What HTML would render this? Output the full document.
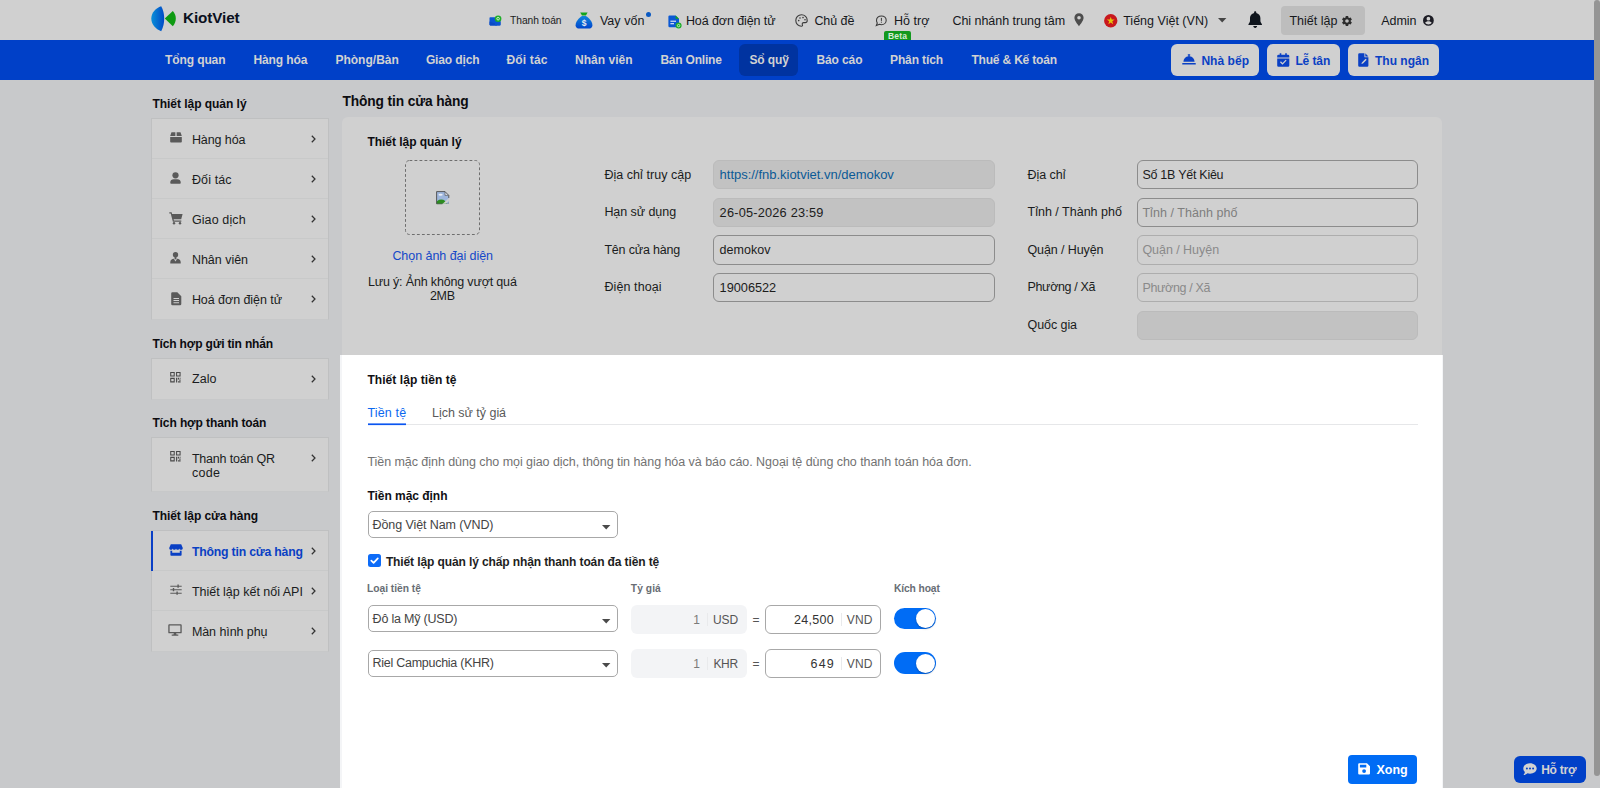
<!DOCTYPE html>
<html lang="vi"><head><meta charset="utf-8"><title>KiotViet - Thông tin cửa hàng</title>
<style>
html,body{margin:0;padding:0;}
body{width:1600px;height:788px;overflow:hidden;position:relative;background:#c8c9cb;font-family:"Liberation Sans", sans-serif;}
.t{position:absolute;white-space:pre;font-family:"Liberation Sans", sans-serif;}
svg{display:block;overflow:visible}
</style></head><body>
<div style="position:absolute;left:0px;top:0px;width:1600px;height:40px;background:#d0d0d0"></div>
<div style="position:absolute;left:0px;top:40px;width:1600px;height:40px;background:#0040c8"></div>
<svg style="position:absolute;left:151px;top:5.5px;" width="26" height="26" viewBox="0 0 26 26"><defs><linearGradient id="lg" x1="0" y1="0" x2="1" y2="0"><stop offset="0" stop-color="#0a8fd8"/><stop offset="1" stop-color="#0049c6"/></linearGradient></defs><path d="M10.2 0.3 C4.6 2.2 0.3 6.8 0.3 12.6 C0.3 18.6 4.6 23.2 10.2 25.2 C12.2 21.5 13.2 17.2 13.2 12.7 C13.2 8.2 12.2 3.9 10.2 0.3 Z" fill="url(#lg)"/><path d="M13.8 12.6 L21.8 4.9 C23.8 7.1 24.8 9.8 24.8 12.6 C24.8 15.4 23.8 18.1 21.8 20.3 Z" fill="#0e9a12"/></svg>
<span class="t" style="left:183.0px;top:8px;line-height:20px;font-size:15.25px;font-weight:700;color:#0b1020;letter-spacing:-0.10px;">KiotViet</span>
<svg style="position:absolute;left:488.5px;top:14.5px;" width="13" height="11" viewBox="0 0 13 11"><path d="M1.3 2.2 H8 V10.4 H1.3 a0.8 0.8 0 0 1 -0.8 -0.8 V3 a0.8 0.8 0 0 1 0.8 -0.8Z" fill="#0a55d2"/><path d="M0.5 6.5 L6 8.4 L11.5 6.5 V9.6 a0.8 0.8 0 0 1 -0.8 0.8 H1.3 a0.8 0.8 0 0 1 -0.8 -0.8Z" fill="#0a4ac4"/><rect x="6" y="5" width="5.5" height="5.4" fill="#0a55d2"/><circle cx="9.1" cy="3.7" r="3.3" fill="#1fae2a"/><circle cx="9.1" cy="3.7" r="1.3" fill="none" stroke="#d8f0d8" stroke-width="0.9"/></svg>
<span class="t" style="left:510.0px;top:14px;line-height:14px;font-size:10.25px;font-weight:400;color:#1c1c22;letter-spacing:-0.04px;">Thanh toán</span>
<svg style="position:absolute;left:574.5px;top:11.5px;" width="18" height="17" viewBox="0 0 18 17"><defs><linearGradient id="mb" x1="0" y1="0" x2="0" y2="1"><stop offset="0" stop-color="#0f86dc"/><stop offset="1" stop-color="#0044cc"/></linearGradient></defs><path d="M5.2 0.4 H12.6 L10.9 3.6 H7 Z" fill="#12a51c"/><path d="M7 4 H10.9 C14 5.8 17.4 9.6 17.4 13.2 C17.4 15.6 15.8 16.6 13.6 16.6 H4.4 C2.2 16.6 0.6 15.6 0.6 13.2 C0.6 9.6 4 5.8 7 4 Z" fill="url(#mb)"/><text x="9" y="14" font-family="Liberation Sans, sans-serif" font-size="8.5" font-weight="700" fill="#e4e8f0" text-anchor="middle">$</text></svg>
<span class="t" style="left:599.9px;top:13px;line-height:17px;font-size:12.5px;font-weight:400;color:#16181c;letter-spacing:0.04px;">Vay vốn</span>
<div style="position:absolute;left:646px;top:11.9px;width:5px;height:5px;border-radius:50%;background:#0a59c2"></div>
<svg style="position:absolute;left:668px;top:14.5px;" width="14" height="14" viewBox="0 0 14 14"><path d="M1.6 0.4 H7.6 L11 3.8 V11 a1.2 1.2 0 0 1 -1.2 1.2 H1.6 A1.2 1.2 0 0 1 0.4 11 V1.6 A1.2 1.2 0 0 1 1.6 0.4Z" fill="#0a58d4"/><path d="M7.6 0.4 L11 3.8 H7.6Z" fill="#12a51c"/><rect x="2.4" y="5.6" width="5.6" height="1.3" fill="#cfd8ee"/><rect x="2.4" y="8" width="3.6" height="1.3" fill="#cfd8ee"/><circle cx="10.6" cy="10.6" r="3" fill="#1fae2a"/><circle cx="10.6" cy="10.6" r="1.2" fill="none" stroke="#d8f0d8" stroke-width="0.8"/></svg>
<span class="t" style="left:685.9px;top:13px;line-height:17px;font-size:12.5px;font-weight:400;color:#16181c;letter-spacing:-0.09px;">Hoá đơn điện tử</span>
<svg style="position:absolute;left:794.5px;top:14px;" width="13" height="13" viewBox="0 0 13 13"><path d="M6.5 0.8 C3.2 0.8 0.8 3.4 0.8 6.5 C0.8 9.7 3.3 12.2 6.4 12.2 C7.4 12.2 7.8 11.5 7.4 10.7 C6.9 9.6 7.5 8.6 8.7 8.6 H10.2 C11.4 8.6 12.2 7.8 12.2 6.4 C12.2 3.2 9.7 0.8 6.5 0.8Z" fill="none" stroke="#3a3a3a" stroke-width="1.1"/><circle cx="3.7" cy="6.6" r="0.8" fill="#3a3a3a"/><circle cx="5" cy="4" r="0.8" fill="#3a3a3a"/><circle cx="8" cy="3.6" r="0.8" fill="#3a3a3a"/><circle cx="10" cy="5.8" r="0.8" fill="#3a3a3a"/></svg>
<span class="t" style="left:814.4px;top:13px;line-height:17px;font-size:12.5px;font-weight:400;color:#16181c;letter-spacing:-0.07px;">Chủ đề</span>
<svg style="position:absolute;left:874.5px;top:15px;" width="12" height="12" viewBox="0 0 12 12"><path d="M6.4 0.9 C9.2 0.9 11.2 2.8 11.2 5.3 C11.2 7.8 9.2 9.7 6.4 9.7 C5.7 9.7 5 9.6 4.4 9.3 L1.3 10.6 L2.3 8 C1.8 7.3 1.5 6.3 1.5 5.3 C1.5 2.8 3.6 0.9 6.4 0.9Z" fill="none" stroke="#3a3a3a" stroke-width="1.05"/><rect x="5.9" y="2.9" width="1" height="3" fill="#3a3a3a"/><rect x="5.9" y="6.7" width="1" height="1" fill="#3a3a3a"/></svg>
<span class="t" style="left:893.9px;top:13px;line-height:17px;font-size:12.5px;font-weight:400;color:#16181c;letter-spacing:0.04px;">Hỗ trợ</span>
<div style="position:absolute;left:884px;top:31px;width:27px;height:9px;background:#12981e;border-radius:2px 2px 0 0"></div>
<span class="t" style="left:888.1px;top:30px;line-height:12px;font-size:8.5px;font-weight:700;color:#d6ecd6;letter-spacing:0.13px;">Beta</span>
<span class="t" style="left:952.4px;top:13px;line-height:17px;font-size:12.5px;font-weight:400;color:#16181c;letter-spacing:-0.03px;">Chi nhánh trung tâm</span>
<svg style="position:absolute;left:1073.5px;top:13px;" width="10" height="13.5" viewBox="0 0 10 13.5"><path d="M5 0.3 C2.3 0.3 0.4 2.3 0.4 4.8 C0.4 8 5 13.2 5 13.2 C5 13.2 9.6 8 9.6 4.8 C9.6 2.3 7.7 0.3 5 0.3Z M5 3 A1.8 1.8 0 1 1 5 6.6 A1.8 1.8 0 1 1 5 3Z" fill="#4d4d4d" fill-rule="evenodd"/></svg>
<svg style="position:absolute;left:1104px;top:13.8px;" width="13.5" height="13.5" viewBox="0 0 14 14"><circle cx="7" cy="7" r="6.9" fill="#c8171d"/><path d="M7 2.9 L8 5.8 L11.1 5.8 L8.6 7.6 L9.5 10.6 L7 8.8 L4.5 10.6 L5.4 7.6 L2.9 5.8 L6 5.8Z" fill="#e6c20a"/></svg>
<span class="t" style="left:1123.2px;top:13px;line-height:17px;font-size:12.5px;font-weight:400;color:#16181c;letter-spacing:0.01px;">Tiếng Việt (VN)</span>
<svg style="position:absolute;left:1217.5px;top:17.5px;" width="8.4" height="4.6" viewBox="0 0 8.4 4.6"><path d="M0 0 H8.4 L4.2 4.6Z" fill="#454545"/></svg>
<svg style="position:absolute;left:1248px;top:10.7px;" width="14.4" height="17.2" viewBox="0 0 14.4 17.2"><path d="M7.2 0.3 C6.6 0.3 6.1 0.8 6.1 1.4 V1.9 C3.7 2.4 2 4.5 2 7 V9.6 C2 10.9 1.5 12 0.6 12.9 C0.2 13.3 0.4 14.1 1.1 14.1 H13.3 C14 14.1 14.2 13.3 13.8 12.9 C12.9 12 12.4 10.9 12.4 9.6 V7 C12.4 4.5 10.7 2.4 8.3 1.9 V1.4 C8.3 0.8 7.8 0.3 7.2 0.3Z M5.3 15 H9.1 C9.1 16.1 8.3 16.9 7.2 16.9 C6.1 16.9 5.3 16.1 5.3 15Z" fill="#0e141c"/></svg>
<div style="position:absolute;left:1281px;top:6px;width:84px;height:29px;background:#bdbdbd;border-radius:4px"></div>
<span class="t" style="left:1289.4px;top:13px;line-height:17px;font-size:12.5px;font-weight:400;color:#16181c;letter-spacing:0.00px;">Thiết lập</span>
<svg style="position:absolute;left:1341.2px;top:14.6px;" width="12" height="12" viewBox="0 0 24 24"><path d="M19.4 13 c0-.3.1-.6.1-1 s0-.7-.1-1 l2.1-1.6 c.2-.2.2-.4.1-.6 l-2-3.5 c-.1-.2-.4-.3-.6-.2 l-2.5 1 c-.5-.4-1.100-.700-1.700-1 l-.4-2.600 c0-.200-.200-.400-.500-.400 h-4 c-.200 0-.500.200-.500.400 l-.4 2.600 c-.600.300-1.200.600-1.700 1 l-2.500-1 c-.200-.100-.500 0-.600.200 l-2 3.500 c-.100.200-.100.500.100.600 l2.100 1.600 c0 .300-.100.600-.100 1 s0 .700.100 1 l-2.100 1.600 c-.200.200-.200.400-.100.600 l2 3.500 c.100.200.400.300.600.200 l2.500-1 c.500.400 1.100.700 1.700 1 l.4 2.600 c0 .200.200.400.500.400 h4 c.200 0 .500-.200.500-.400 l.4-2.600 c.600-.300 1.200-.600 1.700-1 l2.500 1 c.200.100.500 0 .600-.200 l2-3.500 c.100-.200.100-.500-.100-.600 l-2.100-1.600 z M12 15.500 c-1.900 0-3.500-1.600-3.500-3.500 s1.600-3.500 3.500-3.500 3.500 1.600 3.500 3.500 -1.600 3.500-3.500 3.500 z" fill="#2c2c2c" fill-rule="evenodd"/></svg>
<span class="t" style="left:1381.2px;top:13px;line-height:17px;font-size:12.5px;font-weight:400;color:#16181c;letter-spacing:-0.02px;">Admin</span>
<svg style="position:absolute;left:1423.3px;top:15px;" width="10.8" height="10.8" viewBox="0 0 20 20"><path d="M10 0 A10 10 0 1 0 10 20 A10 10 0 1 0 10 0Z M10 3.400 A3.400 3.400 0 1 1 10 10.200 A3.400 3.400 0 1 1 10 3.400Z M10 17.600 C7.500 17.600 5.300 16.400 4 14.500 C4 12.500 8 11.400 10 11.400 C12 11.400 16 12.500 16 14.500 C14.700 16.400 12.500 17.600 10 17.600Z" fill="#1c1c24" fill-rule="evenodd"/></svg>
<div style="position:absolute;left:739px;top:44px;width:59px;height:31.5px;background:#0033a0;border-radius:6px"></div>
<span class="t" style="left:165.0px;top:52px;line-height:16px;font-size:12px;font-weight:700;color:#d2d2d2;letter-spacing:-0.10px;">Tổng quan</span>
<span class="t" style="left:253.4px;top:52px;line-height:16px;font-size:12px;font-weight:700;color:#d2d2d2;letter-spacing:-0.08px;">Hàng hóa</span>
<span class="t" style="left:335.4px;top:52px;line-height:16px;font-size:12px;font-weight:700;color:#d2d2d2;letter-spacing:0.02px;">Phòng/Bàn</span>
<span class="t" style="left:425.9px;top:52px;line-height:16px;font-size:12px;font-weight:700;color:#d2d2d2;letter-spacing:-0.13px;">Giao dịch</span>
<span class="t" style="left:506.4px;top:52px;line-height:16px;font-size:12px;font-weight:700;color:#d2d2d2;letter-spacing:0.18px;">Đối tác</span>
<span class="t" style="left:575.0px;top:52px;line-height:16px;font-size:12px;font-weight:700;color:#d2d2d2;letter-spacing:0.02px;">Nhân viên</span>
<span class="t" style="left:660.4px;top:52px;line-height:16px;font-size:12px;font-weight:700;color:#d2d2d2;letter-spacing:-0.21px;">Bán Online</span>
<span class="t" style="left:749.4px;top:52px;line-height:16px;font-size:12px;font-weight:700;color:#d2d2d2;letter-spacing:-0.10px;">Sổ quỹ</span>
<span class="t" style="left:816.4px;top:52px;line-height:16px;font-size:12px;font-weight:700;color:#d2d2d2;letter-spacing:-0.10px;">Báo cáo</span>
<span class="t" style="left:890.0px;top:52px;line-height:16px;font-size:12px;font-weight:700;color:#d2d2d2;letter-spacing:-0.12px;">Phân tích</span>
<span class="t" style="left:971.4px;top:52px;line-height:16px;font-size:12px;font-weight:700;color:#d2d2d2;letter-spacing:-0.18px;">Thuế &amp; Kế toán</span>
<div style="position:absolute;left:1171.3px;top:44px;width:87.8px;height:31.6px;background:#d0d0d0;border-radius:6px"></div>
<div style="position:absolute;left:1267.3px;top:44px;width:72.8px;height:31.6px;background:#d0d0d0;border-radius:6px"></div>
<div style="position:absolute;left:1348px;top:44px;width:90.8px;height:31.6px;background:#d0d0d0;border-radius:6px"></div>
<svg style="position:absolute;left:1181.5px;top:53.5px;" width="14" height="11" viewBox="0 0 14 11"><path d="M5.8 0.2 H8.2 V1.4 H7.6 V2.2 C10.4 2.5 12.5 4.8 12.6 7.700 H1.4 C1.5 4.8 3.600 2.5 6.4 2.2 V1.4 H5.8Z" fill="#0a40c4"/><rect x="0.2" y="8.9" width="13.6" height="1.7" rx="0.5" fill="#0a40c4"/></svg>
<span class="t" style="left:1201.4px;top:53px;line-height:17px;font-size:12px;font-weight:700;color:#0a40c4;letter-spacing:0.05px;">Nhà bếp</span>
<svg style="position:absolute;left:1277px;top:52.5px;" width="12.5" height="14" viewBox="0 0 12.5 14"><path d="M2.700 0.2 H4.3 V1.700 H8.2 V0.2 H9.8 V1.700 H11 A1.3 1.3 0 0 1 12.3 3 V4.600 H0.2 V3 A1.3 1.3 0 0 1 1.5 1.700 H2.700Z" fill="#0a40c4"/><path d="M0.2 5.500 H12.3 V12.500 A1.3 1.3 0 0 1 11 13.800 H1.5 A1.3 1.3 0 0 1 0.200 12.500Z M9.600 7.600 L8.700 6.700 L5.500 9.900 L3.900 8.300 L3 9.200 L5.500 11.700Z" fill="#0a40c4" fill-rule="evenodd"/></svg>
<span class="t" style="left:1295.4px;top:53px;line-height:17px;font-size:12px;font-weight:700;color:#0a40c4;letter-spacing:-0.10px;">Lễ tân</span>
<svg style="position:absolute;left:1358.4px;top:52.5px;" width="10.6" height="14" viewBox="0 0 10.6 14"><path d="M1.4 0.2 H6.4 V3.400 A0.900 0.900 0 0 0 7.300 4.300 H10.400 V12.600 A1.200 1.200 0 0 1 9.200 13.800 H1.400 A1.200 1.200 0 0 1 0.200 12.600 V1.400 A1.200 1.200 0 0 1 1.400 0.200Z M7.600 5.700 L8.700 6.800 L5 10.500 L3.400 11 L3.900 9.400Z" fill="#0a40c4" fill-rule="evenodd"/><path d="M7.300 0.200 L10.400 3.400 H7.300Z" fill="#0a40c4"/></svg>
<span class="t" style="left:1375.0px;top:53px;line-height:17px;font-size:12px;font-weight:700;color:#0a40c4;letter-spacing:0.01px;">Thu ngân</span>
<span class="t" style="left:152.4px;top:96px;line-height:16px;font-size:12px;font-weight:700;color:#0c0c10;letter-spacing:-0.03px;">Thiết lập quản lý</span>
<div style="position:absolute;left:151px;top:118px;width:178px;height:202px;background:#d0d0d0;border:1px solid #bfc0c1;border-bottom-color:#c7c8c9;box-sizing:border-box"></div>
<div style="position:absolute;left:152px;top:158px;width:176px;height:1px;background:#c8c9c9"></div>
<div style="position:absolute;left:152px;top:198px;width:176px;height:1px;background:#c8c9c9"></div>
<div style="position:absolute;left:152px;top:238px;width:176px;height:1px;background:#c8c9c9"></div>
<div style="position:absolute;left:152px;top:278px;width:176px;height:1px;background:#c8c9c9"></div>
<svg style="position:absolute;left:169.8px;top:132px;" width="12" height="10.9" viewBox="0 0 13 11.8"><path d="M1.6 0.300 H5.800 V4.200 H0.200 Z M7.200 0.300 H11.400 L12.800 4.200 H7.200 Z M0.200 5.400 H12.800 V10.600 A0.900 0.900 0 0 1 11.900 11.500 H1.100 A0.900 0.900 0 0 1 0.200 10.600 Z" fill="#5a5a5a"/></svg>
<span class="t" style="left:191.9px;top:132px;line-height:17px;font-size:12.5px;font-weight:400;color:#1a1c20;letter-spacing:-0.08px;">Hàng hóa</span>
<svg style="position:absolute;left:311.3px;top:135.2px;" width="5" height="8" viewBox="0 0 5 8"><path d="M0.8 0.7 L4 4 L0.8 7.3" fill="none" stroke="#333" stroke-width="1.25"/></svg>
<svg style="position:absolute;left:170.4px;top:171.6px;" width="11" height="11.75" viewBox="0 0 12 12.8"><circle cx="6" cy="3.600" r="3.400" fill="#5a5a5a"/><path d="M0.300 12.800 V11.300 C0.300 9.200 2 8 4 8 H8 C10 8 11.700 9.200 11.700 11.300 V12 A0.800 0.800 0 0 1 10.900 12.800 H1.100 A0.800 0.800 0 0 1 0.300 12 Z" fill="#5a5a5a"/></svg>
<span class="t" style="left:191.9px;top:172px;line-height:17px;font-size:12.5px;font-weight:400;color:#1a1c20;letter-spacing:0.13px;">Đối tác</span>
<svg style="position:absolute;left:311.3px;top:175.2px;" width="5" height="8" viewBox="0 0 5 8"><path d="M0.8 0.7 L4 4 L0.8 7.3" fill="none" stroke="#333" stroke-width="1.25"/></svg>
<svg style="position:absolute;left:168.5px;top:212.3px;" width="14" height="12.6" viewBox="0 0 14 12.6"><path d="M0.300 0.300 H2.600 L3.100 1.900 H13.600 L12.200 7.300 H4.600 L4.900 8.500 H12.300 V9.700 H3.900 L1.700 1.500 H0.300 Z" fill="#5a5a5a"/><circle cx="5" cy="11.300" r="1.200" fill="#5a5a5a"/><circle cx="11" cy="11.300" r="1.200" fill="#5a5a5a"/></svg>
<span class="t" style="left:191.9px;top:212px;line-height:17px;font-size:12.5px;font-weight:400;color:#1a1c20;letter-spacing:0.11px;">Giao dịch</span>
<svg style="position:absolute;left:311.3px;top:215.2px;" width="5" height="8" viewBox="0 0 5 8"><path d="M0.8 0.7 L4 4 L0.8 7.3" fill="none" stroke="#333" stroke-width="1.25"/></svg>
<svg style="position:absolute;left:170.4px;top:251.7px;" width="11" height="11.55" viewBox="0 0 12 12.6"><circle cx="6" cy="3" r="2.900" fill="#5a5a5a"/><path d="M5 5.500 H7 V8 H5 Z" fill="#5a5a5a"/><path d="M0.300 12.600 V11.200 C0.300 9 2 7.600 4.200 7.400 L6 10.400 L7.800 7.400 C10 7.600 11.700 9 11.700 11.200 V12.600 Z" fill="#5a5a5a"/></svg>
<span class="t" style="left:191.9px;top:252px;line-height:17px;font-size:12.5px;font-weight:400;color:#1a1c20;letter-spacing:-0.02px;">Nhân viên</span>
<svg style="position:absolute;left:311.3px;top:255.2px;" width="5" height="8" viewBox="0 0 5 8"><path d="M0.8 0.7 L4 4 L0.8 7.3" fill="none" stroke="#333" stroke-width="1.25"/></svg>
<svg style="position:absolute;left:170.5px;top:292px;" width="10.5" height="13.5" viewBox="0 0 10.5 13.5"><path d="M1.400 0.200 H6.300 L10.300 4.200 V12.100 A1.200 1.200 0 0 1 9.100 13.300 H1.400 A1.200 1.200 0 0 1 0.200 12.100 V1.400 A1.200 1.200 0 0 1 1.400 0.200 Z M2.500 6 V7 H8 V6 Z M2.500 8.100 V9.100 H8 V8.100 Z M2.500 10.200 V11.200 H8 V10.200 Z" fill="#5a5a5a" fill-rule="evenodd"/></svg>
<span class="t" style="left:191.9px;top:292px;line-height:17px;font-size:12.5px;font-weight:400;color:#1a1c20;letter-spacing:-0.05px;">Hoá đơn điện tử</span>
<svg style="position:absolute;left:311.3px;top:295.2px;" width="5" height="8" viewBox="0 0 5 8"><path d="M0.8 0.7 L4 4 L0.8 7.3" fill="none" stroke="#333" stroke-width="1.25"/></svg>
<span class="t" style="left:152.4px;top:336px;line-height:16px;font-size:12px;font-weight:700;color:#0c0c10;letter-spacing:-0.16px;">Tích hợp gửi tin nhắn</span>
<div style="position:absolute;left:151px;top:358px;width:178px;height:42px;background:#d0d0d0;border:1px solid #bfc0c1;border-bottom-color:#c7c8c9;box-sizing:border-box"></div>
<svg style="position:absolute;left:170.3px;top:371.5px;" width="10.8" height="10.4" viewBox="0 0 11 11"><path d="M0 0 H4.800 V4.800 H0 Z M1.100 1.100 V3.700 H3.700 V1.100 Z M6.200 0 H11 V4.800 H6.200 Z M7.300 1.100 V3.700 H9.900 V1.100 Z M0 6.200 H4.800 V11 H0 Z M1.100 7.300 V9.900 H3.700 V7.300 Z M6.200 6.200 H7.400 V11 H6.200 Z M8.100 6.200 H9.300 V7.900 H8.100 Z M9.600 7.900 H11 V9.300 H9.600 Z M8.300 9.700 H11 V11 H8.300 Z M10 6.200 H11 V7.200 H10 Z" fill="#484848" fill-rule="evenodd"/></svg>
<span class="t" style="left:191.9px;top:371px;line-height:17px;font-size:12.5px;font-weight:400;color:#1a1c20;letter-spacing:0.12px;">Zalo</span>
<svg style="position:absolute;left:311.3px;top:374.7px;" width="5" height="8" viewBox="0 0 5 8"><path d="M0.8 0.7 L4 4 L0.8 7.3" fill="none" stroke="#333" stroke-width="1.25"/></svg>
<span class="t" style="left:152.4px;top:415px;line-height:16px;font-size:12px;font-weight:700;color:#0c0c10;letter-spacing:-0.10px;">Tích hợp thanh toán</span>
<div style="position:absolute;left:151px;top:437px;width:178px;height:55px;background:#d0d0d0;border:1px solid #bfc0c1;border-bottom-color:#c7c8c9;box-sizing:border-box"></div>
<svg style="position:absolute;left:170.3px;top:450.6px;" width="10.8" height="10.4" viewBox="0 0 11 11"><path d="M0 0 H4.800 V4.800 H0 Z M1.100 1.100 V3.700 H3.700 V1.100 Z M6.200 0 H11 V4.800 H6.200 Z M7.300 1.100 V3.700 H9.900 V1.100 Z M0 6.200 H4.800 V11 H0 Z M1.100 7.300 V9.900 H3.700 V7.300 Z M6.200 6.200 H7.400 V11 H6.200 Z M8.100 6.200 H9.300 V7.900 H8.100 Z M9.600 7.900 H11 V9.300 H9.600 Z M8.300 9.700 H11 V11 H8.300 Z M10 6.200 H11 V7.200 H10 Z" fill="#484848" fill-rule="evenodd"/></svg>
<span class="t" style="left:191.9px;top:451px;line-height:17px;font-size:12.5px;font-weight:400;color:#1a1c20;letter-spacing:-0.19px;">Thanh toán QR</span>
<span class="t" style="left:191.9px;top:465px;line-height:17px;font-size:12.5px;font-weight:400;color:#1a1c20;letter-spacing:0.35px;">code</span>
<svg style="position:absolute;left:311.3px;top:454.2px;" width="5" height="8" viewBox="0 0 5 8"><path d="M0.8 0.7 L4 4 L0.8 7.3" fill="none" stroke="#333" stroke-width="1.25"/></svg>
<span class="t" style="left:152.4px;top:508px;line-height:16px;font-size:12px;font-weight:700;color:#0c0c10;letter-spacing:-0.06px;">Thiết lập cửa hàng</span>
<div style="position:absolute;left:151px;top:530px;width:178px;height:122px;background:#d0d0d0;border:1px solid #bfc0c1;border-bottom-color:#c7c8c9;box-sizing:border-box"></div>
<div style="position:absolute;left:152px;top:570px;width:176px;height:1px;background:#c8c9c9"></div>
<div style="position:absolute;left:152px;top:610px;width:176px;height:1px;background:#c8c9c9"></div>
<div style="position:absolute;left:151px;top:531px;width:2px;height:40px;background:#0a3fc6"></div>
<svg style="position:absolute;left:168.7px;top:544px;" width="14" height="12" viewBox="0 0 14 12"><path d="M1.800 0.300 H12.200 L13.800 3.900 C13.800 5.100 12.900 5.800 12 5.800 C11.100 5.800 10.400 5.200 10.300 4.400 C10.200 5.200 9.500 5.800 8.600 5.800 C7.800 5.800 7.100 5.200 7 4.400 C6.900 5.200 6.200 5.800 5.400 5.800 C4.500 5.800 3.800 5.200 3.700 4.400 C3.600 5.200 2.900 5.800 2 5.800 C1.100 5.800 0.200 5.100 0.200 3.900 Z M1.400 6.700 H3.200 V8.700 H10.800 V6.700 H12.600 V11 A0.800 0.800 0 0 1 11.800 11.800 H2.200 A0.800 0.800 0 0 1 1.400 11 Z" fill="#0a40c4"/></svg>
<span class="t" style="left:191.9px;top:544px;line-height:17px;font-size:12.25px;font-weight:700;color:#0a40c4;letter-spacing:-0.19px;">Thông tin cửa hàng</span>
<svg style="position:absolute;left:311.3px;top:547.2px;" width="5" height="8" viewBox="0 0 5 8"><path d="M0.8 0.7 L4 4 L0.8 7.3" fill="none" stroke="#333" stroke-width="1.25"/></svg>
<svg style="position:absolute;left:169.5px;top:583.7px;" width="12" height="11.4" viewBox="0 0 12 11.4"><path d="M0.300 1.700 H7.400 V0.600 H8.800 V1.700 H11.700 V2.700 H8.800 V3.800 H7.400 V2.700 H0.300 Z M0.300 5.200 H2.800 V4.100 H4.200 V5.200 H11.700 V6.200 H4.200 V7.300 H2.800 V6.200 H0.300 Z M0.300 8.700 H6.400 V7.600 H7.800 V8.700 H11.700 V9.700 H7.800 V10.800 H6.400 V9.700 H0.300 Z" fill="#5a5a5a"/></svg>
<span class="t" style="left:191.9px;top:584px;line-height:17px;font-size:12.5px;font-weight:400;color:#1a1c20;letter-spacing:-0.01px;">Thiết lập kết nối API</span>
<svg style="position:absolute;left:311.3px;top:587.2px;" width="5" height="8" viewBox="0 0 5 8"><path d="M0.8 0.7 L4 4 L0.8 7.3" fill="none" stroke="#333" stroke-width="1.25"/></svg>
<svg style="position:absolute;left:168.3px;top:623.8px;" width="14" height="12" viewBox="0 0 14 12"><path d="M1.200 0.300 H12.800 A0.900 0.900 0 0 1 13.700 1.200 V8.400 A0.900 0.900 0 0 1 12.800 9.300 H8.200 L8.500 10.600 H10.300 V11.700 H3.700 V10.600 H5.500 L5.800 9.300 H1.200 A0.900 0.900 0 0 1 0.300 8.400 V1.200 A0.900 0.900 0 0 1 1.200 0.300 Z M1.600 1.600 V8 H12.400 V1.600 Z" fill="#5a5a5a" fill-rule="evenodd"/></svg>
<span class="t" style="left:191.9px;top:624px;line-height:17px;font-size:12.5px;font-weight:400;color:#1a1c20;letter-spacing:-0.07px;">Màn hình phụ</span>
<svg style="position:absolute;left:311.3px;top:627.2px;" width="5" height="8" viewBox="0 0 5 8"><path d="M0.8 0.7 L4 4 L0.8 7.3" fill="none" stroke="#333" stroke-width="1.25"/></svg>
<span class="t" style="left:342.5px;top:92px;line-height:19px;font-size:13.75px;font-weight:700;color:#0c0c10;letter-spacing:-0.13px;">Thông tin cửa hàng</span>
<div style="position:absolute;left:342px;top:117px;width:1100px;height:240px;background:#d0d0d0;border-radius:6px 6px 0 0"></div>
<span class="t" style="left:367.4px;top:134px;line-height:16px;font-size:12px;font-weight:700;color:#0c0c10;letter-spacing:-0.03px;">Thiết lập quản lý</span>
<svg style="position:absolute;left:405px;top:160px;" width="75" height="75" viewBox="0 0 75 75"><rect x="0.5" y="0.5" width="74" height="74" rx="4" fill="none" stroke="#6e6e6e" stroke-width="1" stroke-dasharray="2.8 2.2"/></svg>
<svg style="position:absolute;left:435.8px;top:191px;" width="13.4" height="13.4" viewBox="0 0 13.4 13.4"><defs><clipPath id="bi"><path d="M0.600 0.600 H9 L12.800 4.400 V12.800 H0.600 Z"/></clipPath></defs><path d="M0.600 0.600 H9 L12.800 4.400 V12.800 H0.600 Z" fill="#9eb6dc"/><g clip-path="url(#bi)"><ellipse cx="4.600" cy="3.700" rx="2.100" ry="1" fill="#e9eef6"/><ellipse cx="5.200" cy="13.600" rx="5.600" ry="5" fill="#2c8c20"/><path d="M9 0.600 V4.400 H12.800 Z" fill="#dfe3ea"/><path d="M5.800 13.600 L13.400 6.600 V9.400 L9 13.600 Z" fill="#d0d0d0"/><path d="M10.400 13.400 L13.400 10.600 V13.400 Z" fill="#7e8e9e"/></g><path d="M0.600 12.800 V0.600 H9 L12.800 4.400 V7" fill="none" stroke="#4c4c4c" stroke-width="0.9"/><path d="M9 0.600 V4.400 H12.800" fill="none" stroke="#5a5a5a" stroke-width="0.7"/><path d="M0.600 12.800 H6.400" fill="none" stroke="#3c5c34" stroke-width="0.8"/></svg>
<span class="t" style="left:392.4px;top:248px;line-height:17px;font-size:12.5px;font-weight:400;color:#1448c8;letter-spacing:-0.05px;">Chọn ảnh đại diện</span>
<span class="t" style="left:367.9px;top:274px;line-height:16px;font-size:12.5px;font-weight:400;color:#1a1c20;letter-spacing:-0.16px;">Lưu ý: Ảnh không vượt quá</span>
<span class="t" style="left:429.9px;top:288px;line-height:16px;font-size:12.5px;font-weight:400;color:#1a1c20;letter-spacing:-0.29px;">2MB</span>
<span class="t" style="left:604.4px;top:167px;line-height:17px;font-size:12.5px;font-weight:400;color:#1a1c20;letter-spacing:0.05px;">Địa chỉ truy cập</span>
<span class="t" style="left:604.4px;top:204px;line-height:17px;font-size:12.5px;font-weight:400;color:#1a1c20;letter-spacing:-0.06px;">Hạn sử dụng</span>
<span class="t" style="left:604.4px;top:242px;line-height:17px;font-size:12.5px;font-weight:400;color:#1a1c20;letter-spacing:-0.18px;">Tên cửa hàng</span>
<span class="t" style="left:604.4px;top:279px;line-height:17px;font-size:12.5px;font-weight:400;color:#1a1c20;letter-spacing:0.10px;">Điện thoại</span>
<div style="position:absolute;left:713px;top:160px;width:282px;height:29px;background:#c2c2c2;border:1px solid #bbbbbb;border-radius:6px;box-sizing:border-box"></div>
<div style="position:absolute;left:713px;top:197.5px;width:282px;height:29px;background:#c2c2c2;border:1px solid #bbbbbb;border-radius:6px;box-sizing:border-box"></div>
<div style="position:absolute;left:713px;top:235px;width:282px;height:29.5px;background:#d0d0d0;border:1px solid #8c8c8c;border-radius:6px;box-sizing:border-box"></div>
<div style="position:absolute;left:713px;top:272.5px;width:282px;height:29.5px;background:#d0d0d0;border:1px solid #8c8c8c;border-radius:6px;box-sizing:border-box"></div>
<span class="t" style="left:719.6px;top:166px;line-height:17px;font-size:13px;font-weight:400;color:#0b5a96;letter-spacing:-0.02px;">https://fnb.kiotviet.vn/demokov</span>
<span class="t" style="left:719.6px;top:204px;line-height:17px;font-size:12.75px;font-weight:400;color:#1c1c1c;letter-spacing:0.21px;">26-05-2026 23:59</span>
<span class="t" style="left:719.6px;top:242px;line-height:17px;font-size:12.5px;font-weight:400;color:#1c1c1c;letter-spacing:0.04px;">demokov</span>
<span class="t" style="left:719.6px;top:279px;line-height:17px;font-size:12.75px;font-weight:400;color:#1c1c1c;letter-spacing:-0.02px;">19006522</span>
<span class="t" style="left:1027.5px;top:167px;line-height:17px;font-size:12.5px;font-weight:400;color:#1a1c20;letter-spacing:-0.03px;">Địa chỉ</span>
<span class="t" style="left:1027.5px;top:204px;line-height:17px;font-size:12.5px;font-weight:400;color:#1a1c20;letter-spacing:0.01px;">Tỉnh / Thành phố</span>
<span class="t" style="left:1027.5px;top:242px;line-height:17px;font-size:12.5px;font-weight:400;color:#1a1c20;letter-spacing:-0.10px;">Quận / Huyện</span>
<span class="t" style="left:1027.5px;top:279px;line-height:17px;font-size:12.5px;font-weight:400;color:#1a1c20;letter-spacing:-0.34px;">Phường / Xã</span>
<span class="t" style="left:1027.5px;top:317px;line-height:17px;font-size:12.5px;font-weight:400;color:#1a1c20;letter-spacing:-0.07px;">Quốc gia</span>
<div style="position:absolute;left:1137px;top:160px;width:280.5px;height:29px;background:#d0d0d0;border:1px solid #8c8c8c;border-radius:6px;box-sizing:border-box"></div>
<div style="position:absolute;left:1137px;top:197.5px;width:280.5px;height:29px;background:#d0d0d0;border:1px solid #8c8c8c;border-radius:6px;box-sizing:border-box"></div>
<div style="position:absolute;left:1137px;top:235px;width:280.5px;height:29.5px;background:#d0d0d0;border:1px solid #adadad;border-radius:6px;box-sizing:border-box"></div>
<div style="position:absolute;left:1137px;top:272.5px;width:280.5px;height:29.5px;background:#d0d0d0;border:1px solid #adadad;border-radius:6px;box-sizing:border-box"></div>
<div style="position:absolute;left:1137px;top:310.5px;width:280.5px;height:29px;background:#c2c2c2;border:1px solid #bbbbbb;border-radius:6px;box-sizing:border-box"></div>
<span class="t" style="left:1142.4px;top:167px;line-height:17px;font-size:12.5px;font-weight:400;color:#1c1c1c;letter-spacing:-0.26px;">Số 1B Yết Kiêu</span>
<span class="t" style="left:1142.4px;top:205px;line-height:17px;font-size:12.5px;font-weight:400;color:#7e7e7e;letter-spacing:0.05px;">Tỉnh / Thành phố</span>
<span class="t" style="left:1142.4px;top:242px;line-height:17px;font-size:12.5px;font-weight:400;color:#8a8a8a;letter-spacing:-0.04px;">Quận / Huyện</span>
<span class="t" style="left:1142.4px;top:280px;line-height:17px;font-size:12.5px;font-weight:400;color:#8a8a8a;letter-spacing:-0.33px;">Phường / Xã</span>
<div style="position:absolute;left:340px;top:355px;width:1103px;height:433px;background:#f4f5f7"></div>
<div style="position:absolute;left:342px;top:355px;width:1100px;height:433px;background:#fff"></div>
<span class="t" style="left:367.4px;top:372px;line-height:16px;font-size:12px;font-weight:700;color:#101014;letter-spacing:0.07px;">Thiết lập tiền tệ</span>
<span class="t" style="left:367.4px;top:405px;line-height:17px;font-size:12.5px;font-weight:400;color:#0a68f0;letter-spacing:0.17px;">Tiền tệ</span>
<span class="t" style="left:432.1px;top:405px;line-height:17px;font-size:12.5px;font-weight:400;color:#5a5a5a;letter-spacing:-0.03px;">Lịch sử tỷ giá</span>
<div style="position:absolute;left:368px;top:424px;width:1049.5px;height:1px;background:#e6e7e9"></div>
<svg style="position:absolute;left:368px;top:423px;" width="38" height="3" viewBox="0 0 38 3"><rect x="0" y="0.4" width="38" height="1.7" fill="#0a55f0"/></svg>
<span class="t" style="left:367.4px;top:454px;line-height:17px;font-size:12.5px;font-weight:400;color:#727272;letter-spacing:-0.05px;">Tiền mặc định dùng cho mọi giao dịch, thông tin hàng hóa và báo cáo. Ngoại tệ dùng cho thanh toán hóa đơn.</span>
<span class="t" style="left:367.4px;top:488px;line-height:16px;font-size:12px;font-weight:700;color:#101014;letter-spacing:-0.03px;">Tiền mặc định</span>
<div style="position:absolute;left:367.5px;top:511px;width:250px;height:27px;background:#fff;border:1px solid #a8a8a8;border-radius:5px;box-sizing:border-box"></div>
<span class="t" style="left:372.6px;top:517px;line-height:17px;font-size:12.5px;font-weight:400;color:#444;letter-spacing:-0.10px;">Đồng Việt Nam (VND)</span>
<svg style="position:absolute;left:601.5px;top:525.1px;" width="8.4" height="4.4" viewBox="0 0 8.4 4.4"><path d="M0 0 H8.4 L4.2 4.4Z" fill="#4a4a4a"/></svg>
<div style="position:absolute;left:367.5px;top:554px;width:13px;height:13px;background:#0d6cf8;border-radius:2.5px"></div>
<svg style="position:absolute;left:367.5px;top:554px;" width="13" height="13" viewBox="0 0 13 13"><path d="M3.300 6.700 L5.600 8.900 L9.800 4.400" fill="none" stroke="#fff" stroke-width="1.700" stroke-linecap="round" stroke-linejoin="round"/></svg>
<span class="t" style="left:385.9px;top:554px;line-height:16px;font-size:12px;font-weight:700;color:#1e1e22;letter-spacing:-0.11px;">Thiết lập quản lý chấp nhận thanh toán đa tiền tệ</span>
<span class="t" style="left:367.1px;top:582px;line-height:14px;font-size:10.25px;font-weight:700;color:#686d74;letter-spacing:-0.03px;">Loại tiền tệ</span>
<span class="t" style="left:630.8px;top:582px;line-height:14px;font-size:10.25px;font-weight:700;color:#686d74;letter-spacing:0.08px;">Tỷ giá</span>
<span class="t" style="left:894.0px;top:582px;line-height:14px;font-size:10.25px;font-weight:700;color:#686d74;letter-spacing:-0.11px;">Kích hoạt</span>
<div style="position:absolute;left:367.5px;top:605px;width:250px;height:27px;background:#fff;border:1px solid #a8a8a8;border-radius:5px;box-sizing:border-box"></div>
<span class="t" style="left:372.6px;top:611px;line-height:17px;font-size:12.5px;font-weight:400;color:#444;letter-spacing:-0.20px;">Đô la Mỹ (USD)</span>
<svg style="position:absolute;left:601.5px;top:619.1px;" width="8.4" height="4.4" viewBox="0 0 8.4 4.4"><path d="M0 0 H8.4 L4.2 4.4Z" fill="#4a4a4a"/></svg>
<div style="position:absolute;left:631px;top:604.6px;width:116px;height:29px;background:#f3f4f6;border-radius:6px"></div>
<span class="t" style="left:693.2px;top:612px;line-height:17px;font-size:12px;font-weight:400;color:#7a7a7a;letter-spacing:0.00px;">1</span>
<div style="position:absolute;left:706.5px;top:612.6px;width:1px;height:13px;background:#e9eaec"></div>
<span class="t" style="left:712.9px;top:612px;line-height:17px;font-size:12px;font-weight:400;color:#555;letter-spacing:-0.09px;">USD</span>
<span class="t" style="left:752.6px;top:612px;line-height:17px;font-size:12px;font-weight:400;color:#555;letter-spacing:0.00px;">=</span>
<div style="position:absolute;left:765px;top:604.6px;width:116px;height:29px;background:#fff;border:1px solid #a8a8a8;border-radius:6px;box-sizing:border-box"></div>
<span class="t" style="left:794.1px;top:612px;line-height:17px;font-size:12.5px;font-weight:400;color:#333;letter-spacing:0.27px;">24,500</span>
<div style="position:absolute;left:841px;top:612.6px;width:1px;height:13px;background:#e9eaec"></div>
<span class="t" style="left:846.8px;top:612px;line-height:17px;font-size:12px;font-weight:400;color:#555;letter-spacing:0.11px;">VND</span>
<div style="position:absolute;left:894px;top:607.8000000000001px;width:42px;height:21.6px;background:#006cf5;border-radius:11px"></div>
<div style="position:absolute;left:915.6px;top:609.4px;width:19px;height:19px;background:#fff;border-radius:50%;box-shadow:0 1px 2px rgba(0,0,0,.25)"></div>
<div style="position:absolute;left:367.5px;top:649.5px;width:250px;height:27px;background:#fff;border:1px solid #a8a8a8;border-radius:5px;box-sizing:border-box"></div>
<span class="t" style="left:372.6px;top:655px;line-height:17px;font-size:12.5px;font-weight:400;color:#444;letter-spacing:-0.27px;">Riel Campuchia (KHR)</span>
<svg style="position:absolute;left:601.5px;top:663.4px;" width="8.4" height="4.4" viewBox="0 0 8.4 4.4"><path d="M0 0 H8.4 L4.2 4.4Z" fill="#4a4a4a"/></svg>
<div style="position:absolute;left:631px;top:649px;width:116px;height:29px;background:#f3f4f6;border-radius:6px"></div>
<span class="t" style="left:693.2px;top:656px;line-height:17px;font-size:12px;font-weight:400;color:#7a7a7a;letter-spacing:0.00px;">1</span>
<div style="position:absolute;left:706.5px;top:657px;width:1px;height:13px;background:#e9eaec"></div>
<span class="t" style="left:713.4px;top:656px;line-height:17px;font-size:12px;font-weight:400;color:#555;letter-spacing:-0.34px;">KHR</span>
<span class="t" style="left:752.6px;top:656px;line-height:17px;font-size:12px;font-weight:400;color:#555;letter-spacing:0.00px;">=</span>
<div style="position:absolute;left:765px;top:649px;width:116px;height:29px;background:#fff;border:1px solid #a8a8a8;border-radius:6px;box-sizing:border-box"></div>
<span class="t" style="left:810.6px;top:656px;line-height:17px;font-size:12.5px;font-weight:400;color:#333;letter-spacing:1.10px;">649</span>
<div style="position:absolute;left:841px;top:657px;width:1px;height:13px;background:#e9eaec"></div>
<span class="t" style="left:846.8px;top:656px;line-height:17px;font-size:12px;font-weight:400;color:#555;letter-spacing:0.11px;">VND</span>
<div style="position:absolute;left:894px;top:652.2px;width:42px;height:21.6px;background:#006cf5;border-radius:11px"></div>
<div style="position:absolute;left:915.6px;top:653.8px;width:19px;height:19px;background:#fff;border-radius:50%;box-shadow:0 1px 2px rgba(0,0,0,.25)"></div>
<div style="position:absolute;left:1347.7px;top:755px;width:69.5px;height:28.5px;background:#006cf5;border-radius:4px"></div>
<svg style="position:absolute;left:1358.2px;top:763.3px;" width="12.2" height="11.8" viewBox="0 0 12.2 11.8"><path d="M1.300 0.200 H9 L12 3.200 V10.500 A1.100 1.100 0 0 1 10.900 11.600 H1.300 A1.100 1.100 0 0 1 0.200 10.500 V1.300 A1.100 1.100 0 0 1 1.300 0.200 Z M1.900 1.800 V4.400 H8.300 V1.800 Z M6.100 6.200 A1.900 1.900 0 1 0 6.100 10 A1.900 1.900 0 1 0 6.100 6.200 Z" fill="#fff" fill-rule="evenodd"/></svg>
<span class="t" style="left:1376.6px;top:762px;line-height:17px;font-size:12.5px;font-weight:700;color:#fff;letter-spacing:-0.09px;">Xong</span>
<div style="position:absolute;left:1513.6px;top:756.4px;width:72.4px;height:26.2px;background:#0040c8;border-radius:6px"></div>
<svg style="position:absolute;left:1522.8px;top:762.6px;" width="14" height="12.5" viewBox="0 0 14 12.5"><path d="M7 0.300 C10.700 0.300 13.700 2.600 13.700 5.500 C13.700 8.400 10.700 10.700 7 10.700 C6.100 10.700 5.300 10.600 4.500 10.300 C3.600 11.200 2.200 12 0.500 12.100 C1.300 11.200 1.800 10.200 1.900 9.100 C0.900 8.100 0.300 6.900 0.300 5.500 C0.300 2.600 3.300 0.300 7 0.300 Z M3.900 4.600 A1 1 0 1 0 3.900 6.600 A1 1 0 1 0 3.900 4.600 Z M7 4.600 A1 1 0 1 0 7 6.600 A1 1 0 1 0 7 4.600 Z M10.100 4.600 A1 1 0 1 0 10.100 6.600 A1 1 0 1 0 10.100 4.600 Z" fill="#d2d2d2" fill-rule="evenodd"/></svg>
<span class="t" style="left:1541.2px;top:762px;line-height:16px;font-size:12px;font-weight:700;color:#d2d2d2;letter-spacing:-0.24px;">Hỗ trợ</span>
<div style="position:absolute;left:1593.5px;top:0px;width:6.5px;height:775.5px;background:#959595;border-radius:4px"></div>
</body></html>
